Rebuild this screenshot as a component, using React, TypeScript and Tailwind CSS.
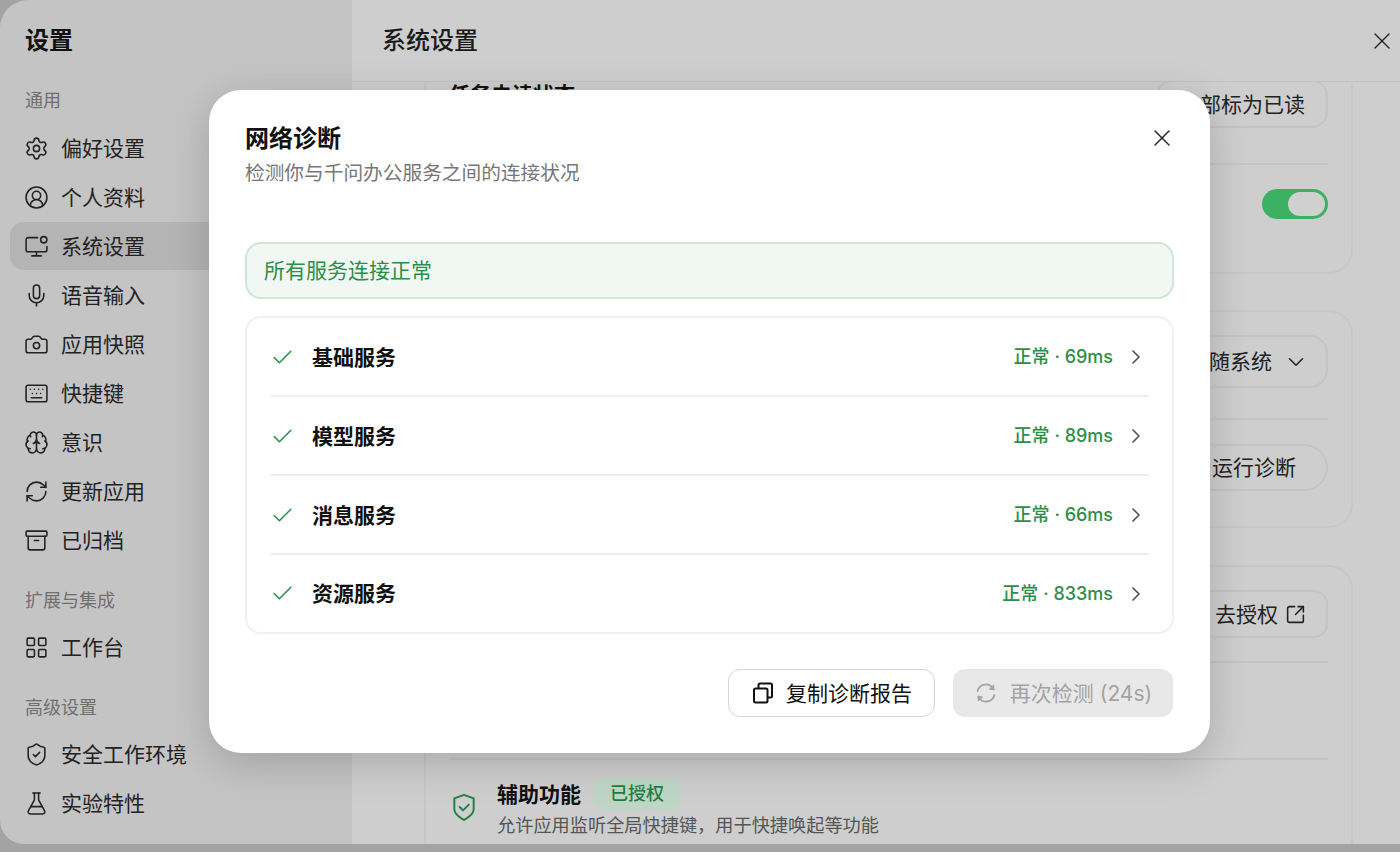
import React from "react";
import {
  Settings, CircleUserRound, Mic, Camera, Keyboard, Brain, RefreshCw, Archive, LayoutGrid,
  ShieldCheck, FlaskConical, X, Check, ChevronRight, ChevronDown, SquareArrowOutUpRight,
} from "lucide-react";

const font = "font-['Inter','Noto_Sans_CJK_SC',sans-serif]";

function MonitorDot({ className }: { className?: string }) {
  return (
    <svg viewBox="0 0 24 24" fill="none" stroke="currentColor" strokeWidth="1.5" strokeLinecap="round" strokeLinejoin="round" className={className}>
      <path d="M13 3.5H4a2 2 0 0 0-2 2V15a2 2 0 0 0 2 2h16a2 2 0 0 0 2-2v-3" />
      <path d="M12 17v4M7.5 21h9" />
      <circle cx="19" cy="5.5" r="3" />
    </svg>
  );
}

function CopyIcon({ className }: { className?: string }) {
  return (
    <svg viewBox="0 0 24 24" fill="none" stroke="currentColor" strokeWidth="2" strokeLinejoin="round" className={className}>
      <rect x="3" y="7.5" width="13.5" height="14" rx="1.5" />
      <path d="M7.5 7.5V4a1.5 1.5 0 0 1 1.5-1.5h10.5A1.5 1.5 0 0 1 21 4v11a1.5 1.5 0 0 1-1.5 1.5h-3" />
    </svg>
  );
}

function RetryIcon({ className }: { className?: string }) {
  return (
    <svg viewBox="0 0 24 24" fill="none" stroke="currentColor" strokeWidth="1.8" strokeLinecap="round" strokeLinejoin="round" className={className}>
      <path d="M3.6 10A8.6 8.6 0 0 1 17.5 5.4" />
      <path d="M20.4 14A8.6 8.6 0 0 1 6.5 18.6" />
      <path d="M19.6 4.5 20.2 9 15.8 8Z" fill="currentColor" strokeWidth="1" />
      <path d="M4.4 19.5 3.8 15 8.2 16Z" fill="currentColor" strokeWidth="1" />
    </svg>
  );
}

function GreenShield({ className }: { className?: string }) {
  return (
    <svg viewBox="0 0 24 30" fill="none" stroke="currentColor" strokeWidth="2" strokeLinecap="round" strokeLinejoin="round" className={className}>
      <path d="M12 2 22 5.5V17C22 22 16 25.5 12 28 8 25.5 2 22 2 17V5.5Z" />
      <path d="M7.5 14.5l3.5 3.5 6-6" />
    </svg>
  );
}

type Item = { label: string; Icon: React.ComponentType<{ className?: string; strokeWidth?: number }>; active?: boolean };

const general: Item[] = [
  { label: "偏好设置", Icon: Settings },
  { label: "个人资料", Icon: CircleUserRound },
  { label: "系统设置", Icon: MonitorDot, active: true },
  { label: "语音输入", Icon: Mic },
  { label: "应用快照", Icon: Camera },
  { label: "快捷键", Icon: Keyboard },
  { label: "意识", Icon: Brain },
  { label: "更新应用", Icon: RefreshCw },
  { label: "已归档", Icon: Archive },
];

function NavItem({ label, Icon, active }: Item) {
  return (
    <div className={`flex h-[48px] items-center gap-[12px] rounded-[14px] pl-[14px] text-[21px] leading-none text-[#222] ${active ? "bg-[#b4b4b4]" : ""}`}>
      <Icon className="h-[25px] w-[25px] shrink-0" strokeWidth={1.5} />
      <span>{label}</span>
    </div>
  );
}

function SectionLabel({ children, className }: { children: React.ReactNode; className?: string }) {
  return <div className={`pl-[15px] text-[18px] leading-[24px] text-[#6f6f6f] ${className ?? ""}`}>{children}</div>;
}

function Sidebar() {
  return (
    <aside className="flex w-[352px] shrink-0 flex-col bg-[#c4c4c4] pl-[10px] pr-[12px]">
      <div className="pl-[15px] pt-[24px] text-[24px] font-semibold leading-[34px] text-[#111]">设置</div>
      <SectionLabel className="mt-[31px]">通用</SectionLabel>
      <div className="mt-[11px] flex flex-col gap-[1px]">
        {general.map((i) => <NavItem key={i.label} {...i} />)}
      </div>
      <SectionLabel className="mt-[25px]">扩展与集成</SectionLabel>
      <div className="mt-[10px]"><NavItem label="工作台" Icon={LayoutGrid} /></div>
      <SectionLabel className="mt-[25px]">高级设置</SectionLabel>
      <div className="mt-[10px] flex flex-col gap-[1px]">
        <NavItem label="安全工作环境" Icon={ShieldCheck} />
        <NavItem label="实验特性" Icon={FlaskConical} />
      </div>
    </aside>
  );
}

const ghostBtn = "flex items-center border-2 border-[#c4c4c4] text-[21px] leading-none text-[#222]";

function MainContent() {
  return (
    <main className="flex min-w-0 flex-1 flex-col bg-[#cecece]">
      <header className="flex h-[82px] shrink-0 items-center justify-between border-b border-[#c2c2c2] pl-[30px] pr-[4px]">
        <h1 className="text-[24px] font-medium leading-none text-[#1a1a1a]">系统设置</h1>
        <X className="h-[28px] w-[28px] text-[#222]" strokeWidth={1.2} />
      </header>
      <div className="flex-1 overflow-hidden pl-[72px] pr-[47px]">
        <section className="-mt-[19px] rounded-[24px] border-2 border-[#c7c7c7] px-[23px] pb-[53px]">
          <div className="flex h-[100px] items-end justify-between border-b-2 border-[#c4c4c4] pb-[35px]">
            <span className="mt-[19px] self-start text-[21px] font-semibold leading-none text-[#111]">任务未读状态</span>
            <div className={`${ghostBtn} h-[48px] w-[172px] justify-center rounded-[16px]`}>全部标为已读</div>
          </div>
          <div className="flex justify-end pt-[24px]">
            <div className="flex h-[30px] w-[66px] items-center justify-end rounded-full bg-[#3cb063] pr-[3px]">
              <div className="h-[24px] w-[37px] rounded-full bg-[#d0d0d0]" />
            </div>
          </div>
        </section>
        <section className="mt-[36px] rounded-[24px] border-2 border-[#c7c7c7] px-[23px]">
          <div className="flex justify-end border-b-2 border-[#c4c4c4] pb-[30px] pt-[23px]">
            <div className={`${ghostBtn} h-[53px] w-[180px] justify-end gap-[11px] rounded-[18px] pr-[17px] text-[18px]`}>跟随系统<ChevronDown className="h-[26px] w-[26px]" strokeWidth={1.4} /></div>
          </div>
          <div className="flex justify-end pb-[35px] pt-[24px]">
            <div className={`${ghostBtn} h-[47px] w-[148px] justify-center rounded-full`}>运行诊断</div>
          </div>
        </section>
        <section className="mt-[37px] rounded-t-[24px] border-2 border-b-0 border-[#c7c7c7] px-[23px] pb-[60px]">
          <div className="flex justify-end border-b-2 border-[#c4c4c4] pb-[23px] pt-[23px]">
            <div className={`${ghostBtn} h-[48px] w-[172px] justify-end gap-[7px] rounded-[14px] pr-[20px]`}>去授权<SquareArrowOutUpRight className="h-[21px] w-[21px]" strokeWidth={1.8} /></div>
          </div>
          <div className="h-[97px] border-b-2 border-[#c4c4c4]" />
          <div className="flex items-center gap-[21px] pl-[3px] pt-[18px]">
            <GreenShield className="h-[29px] w-[24px] shrink-0 text-[#1f7f3f]" />
            <div>
              <div className="flex items-center gap-[12px]">
                <span className="text-[21px] font-semibold leading-none text-[#111]">辅助功能</span>
                <span className="flex h-[32px] w-[88px] items-center justify-center rounded-[12px] bg-[#bfd6c6] text-[18px] font-medium leading-none text-[#1f7f3f]">已授权</span>
              </div>
              <div className="mt-[3px] text-[18.2px] leading-[24px] text-[#555]">允许应用监听全局快捷键，用于快捷唤起等功能</div>
            </div>
          </div>
        </section>
      </div>
    </main>
  );
}

const services = [
  { name: "基础服务", status: "正常 · 69ms" },
  { name: "模型服务", status: "正常 · 89ms" },
  { name: "消息服务", status: "正常 · 66ms" },
  { name: "资源服务", status: "正常 · 833ms" },
];

function Dialog() {
  return (
    <div className="absolute left-[209px] top-[90px] flex h-[663px] w-[1001px] flex-col rounded-[32px] bg-white px-[36px] shadow-[0_10px_40px_rgba(0,0,0,0.18)]">
      <div className="flex items-start justify-between pt-[33px]">
        <div>
          <h2 className="text-[24px] font-semibold leading-[32px] text-[#111]">网络诊断</h2>
          <p className="mt-[5px] text-[19.7px] leading-[27px] text-[#777]">检测你与千问办公服务之间的连接状况</p>
        </div>
        <X className="-mr-[2px] mt-[1px] h-[28px] w-[28px] text-[#222]" strokeWidth={1.2} />
      </div>
      <div className="mt-[55px] flex h-[57px] items-center rounded-[16px] border-2 border-[#cfe5d6] bg-[#f1f7f3] pl-[17px] text-[21px] leading-none text-[#2b8f47]">所有服务连接正常</div>
      <div className="mt-[17px] rounded-[16px] border-2 border-[#f0f0f0] px-[23px]">
        {services.map((s, i) => (
          <div key={s.name} className={`flex items-center pr-[1px] ${i < 3 ? "h-[79px] border-b-2 border-[#eeeeee] pt-[1px]" : "h-[77px]"}`}>
            <Check className="h-[25px] w-[25px] text-[#2b8f47]" strokeWidth={1.5} />
            <span className="ml-[17px] text-[21px] font-semibold leading-none text-[#111]">{s.name}</span>
            <span className="ml-auto text-[18px] font-medium leading-none text-[#2b8f47]">{s.status}</span>
            <ChevronRight className="ml-[11px] h-[24px] w-[24px] text-[#555]" strokeWidth={1.7} />
          </div>
        ))}
      </div>
      <div className="mt-[35px] flex justify-end gap-[18px]">
        <div className="flex h-[48px] w-[207px] items-center justify-center gap-[11px] rounded-[12px] border border-[#d4d4d4] text-[21px] leading-none text-[#111]">
          <CopyIcon className="h-[24px] w-[24px]" />复制诊断报告
        </div>
        <div className="mr-[1px] flex h-[48px] w-[220px] items-center justify-center gap-[12px] rounded-[12px] bg-[#e8e8e8] text-[21px] leading-none text-[#a3a3a3]">
          <RetryIcon className="h-[24px] w-[24px]" />再次检测 (24s)
        </div>
      </div>
    </div>
  );
}

export default function App() {
  return (
    <div className={`relative h-[852px] w-[1400px] overflow-hidden bg-[#a3a3a3] ${font}`}>
      <div className="flex h-[844px] overflow-hidden rounded-bl-[24px] rounded-tl-[28px]">
        <Sidebar />
        <MainContent />
      </div>
      <Dialog />
    </div>
  );
}
